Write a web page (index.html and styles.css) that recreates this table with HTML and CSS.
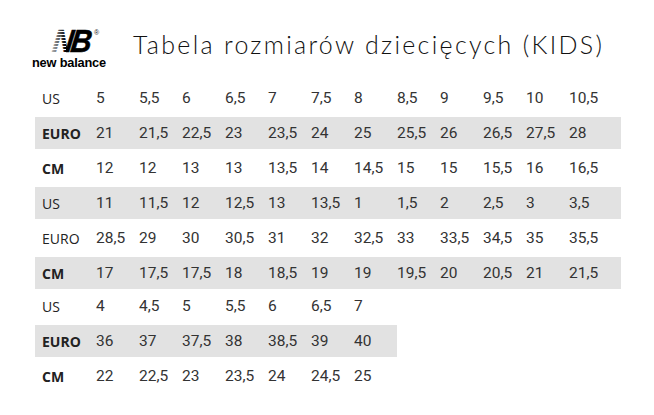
FILE: index.html
```html
<!DOCTYPE html>
<html lang="pl">
<head>
<meta charset="utf-8">
<title>Tabela rozmiarów</title>
<link rel="stylesheet" href="styles.css">
</head>
<body>
<div class="page">
  <header class="header">
    <div class="logo">
      <div class="nb">
        <span class="nb-text">NB</span>
        <span class="nb-stripes"></span>
        <span class="nb-reg">®</span>
      </div>
      <div class="nb-word">new balance</div>
    </div>
    <h1 class="title">Tabela rozmiarów dziecięcych (KIDS)</h1>
  </header>

  <div class="table">
    <div class="row"><span class="lab">US</span><span>5</span><span>5,5</span><span>6</span><span>6,5</span><span>7</span><span>7,5</span><span>8</span><span>8,5</span><span>9</span><span>9,5</span><span>10</span><span>10,5</span></div>
    <div class="row band"><span class="lab b">EURO</span><span>21</span><span>21,5</span><span>22,5</span><span>23</span><span>23,5</span><span>24</span><span>25</span><span>25,5</span><span>26</span><span>26,5</span><span>27,5</span><span>28</span></div>
    <div class="row"><span class="lab b">CM</span><span>12</span><span>12</span><span>13</span><span>13</span><span>13,5</span><span>14</span><span>14,5</span><span>15</span><span>15</span><span>15,5</span><span>16</span><span>16,5</span></div>

    <div class="row band"><span class="lab">US</span><span>11</span><span>11,5</span><span>12</span><span>12,5</span><span>13</span><span>13,5</span><span>1</span><span>1,5</span><span>2</span><span>2,5</span><span>3</span><span>3,5</span></div>
    <div class="row"><span class="lab">EURO</span><span>28,5</span><span>29</span><span>30</span><span>30,5</span><span>31</span><span>32</span><span>32,5</span><span>33</span><span>33,5</span><span>34,5</span><span>35</span><span>35,5</span></div>
    <div class="row band"><span class="lab b">CM</span><span>17</span><span>17,5</span><span>17,5</span><span>18</span><span>18,5</span><span>19</span><span>19</span><span>19,5</span><span>20</span><span>20,5</span><span>21</span><span>21,5</span></div>

    <div class="row short sec3"><span class="lab">US</span><span>4</span><span>4,5</span><span>5</span><span>5,5</span><span>6</span><span>6,5</span><span>7</span></div>
    <div class="row short band"><span class="lab b">EURO</span><span>36</span><span>37</span><span>37,5</span><span>38</span><span>38,5</span><span>39</span><span>40</span></div>
    <div class="row short"><span class="lab b">CM</span><span>22</span><span>22,5</span><span>23</span><span>23,5</span><span>24</span><span>24,5</span><span>25</span></div>
  </div>
</div>
</body>
</html>
```

FILE: styles.css
```css
* { box-sizing: border-box; }
html, body { margin: 0; padding: 0; background: #fff; }
body { width: 654px; height: 415px; overflow: hidden; }

.page { display: flex; flex-direction: column; }

.header {
  height: 82px;
  display: flex;
  align-items: flex-start;
}

.logo {
  flex: 0 0 133px;
  padding-left: 32px;
  padding-top: 29px;
  display: flex;
  flex-direction: column;
  align-items: flex-start;
}

.nb {
  position: relative;
  margin-left: 21px;
  height: 24px;
  width: 44px;
}

.nb-text {
  display: block;
  font-family: "Liberation Sans", Arial, sans-serif;
  font-weight: 700;
  font-style: italic;
  font-size: 32px;
  line-height: 24px;
  letter-spacing: -3px;
  color: #000;
  transform: scaleX(0.9) skewX(-8deg);
  transform-origin: left center;
  -webkit-text-stroke: 0.6px #000;
}

.nb-stripes {
  position: absolute;
  left: -4px;
  top: 0;
  width: 17px;
  height: 24px;
  background:
    repeating-linear-gradient(to bottom, transparent 0 2px, #fff 2px 3px),
    linear-gradient(to right, rgba(255,255,255,0.85), rgba(255,255,255,0));
}

.nb-reg {
  position: absolute;
  left: 41px;
  top: 0;
  font-family: "Liberation Sans", Arial, sans-serif;
  font-size: 7px;
  line-height: 7px;
  color: #222;
}

.nb-word {
  margin-top: 4px;
  font-family: "Liberation Sans", Arial, sans-serif;
  font-weight: 700;
  font-size: 12.8px;
  line-height: 12px;
  letter-spacing: -0.2px;
  color: #000;
  white-space: nowrap;
}

.title {
  margin: 0;
  padding-top: 29px;
  font-family: Lato, "DejaVu Sans", sans-serif;
  font-weight: 300;
  font-size: 25px;
  line-height: 30px;
  letter-spacing: 2.3px;
  color: #111;
  white-space: nowrap;
}

.table {
  margin-left: 35px;
  width: 586px;
  display: flex;
  flex-direction: column;
  gap: 3px;
}

.row {
  display: grid;
  grid-template-columns: 54px repeat(12, 43px);
  height: 32px;
  align-items: center;
  padding-left: 7px;
  font-family: Roboto, "Open Sans", sans-serif;
  font-size: 15.5px;
  color: #333;
}

.row.band { background: #e2e2e2; }
.row.short { width: 362px; }
.row.sec3 { margin-top: -2px; }

.lab {
  font-family: "Open Sans", "Noto Sans", sans-serif;
  font-size: 14px;
  color: #222;
}
.lab.b { font-weight: 700; }
```
